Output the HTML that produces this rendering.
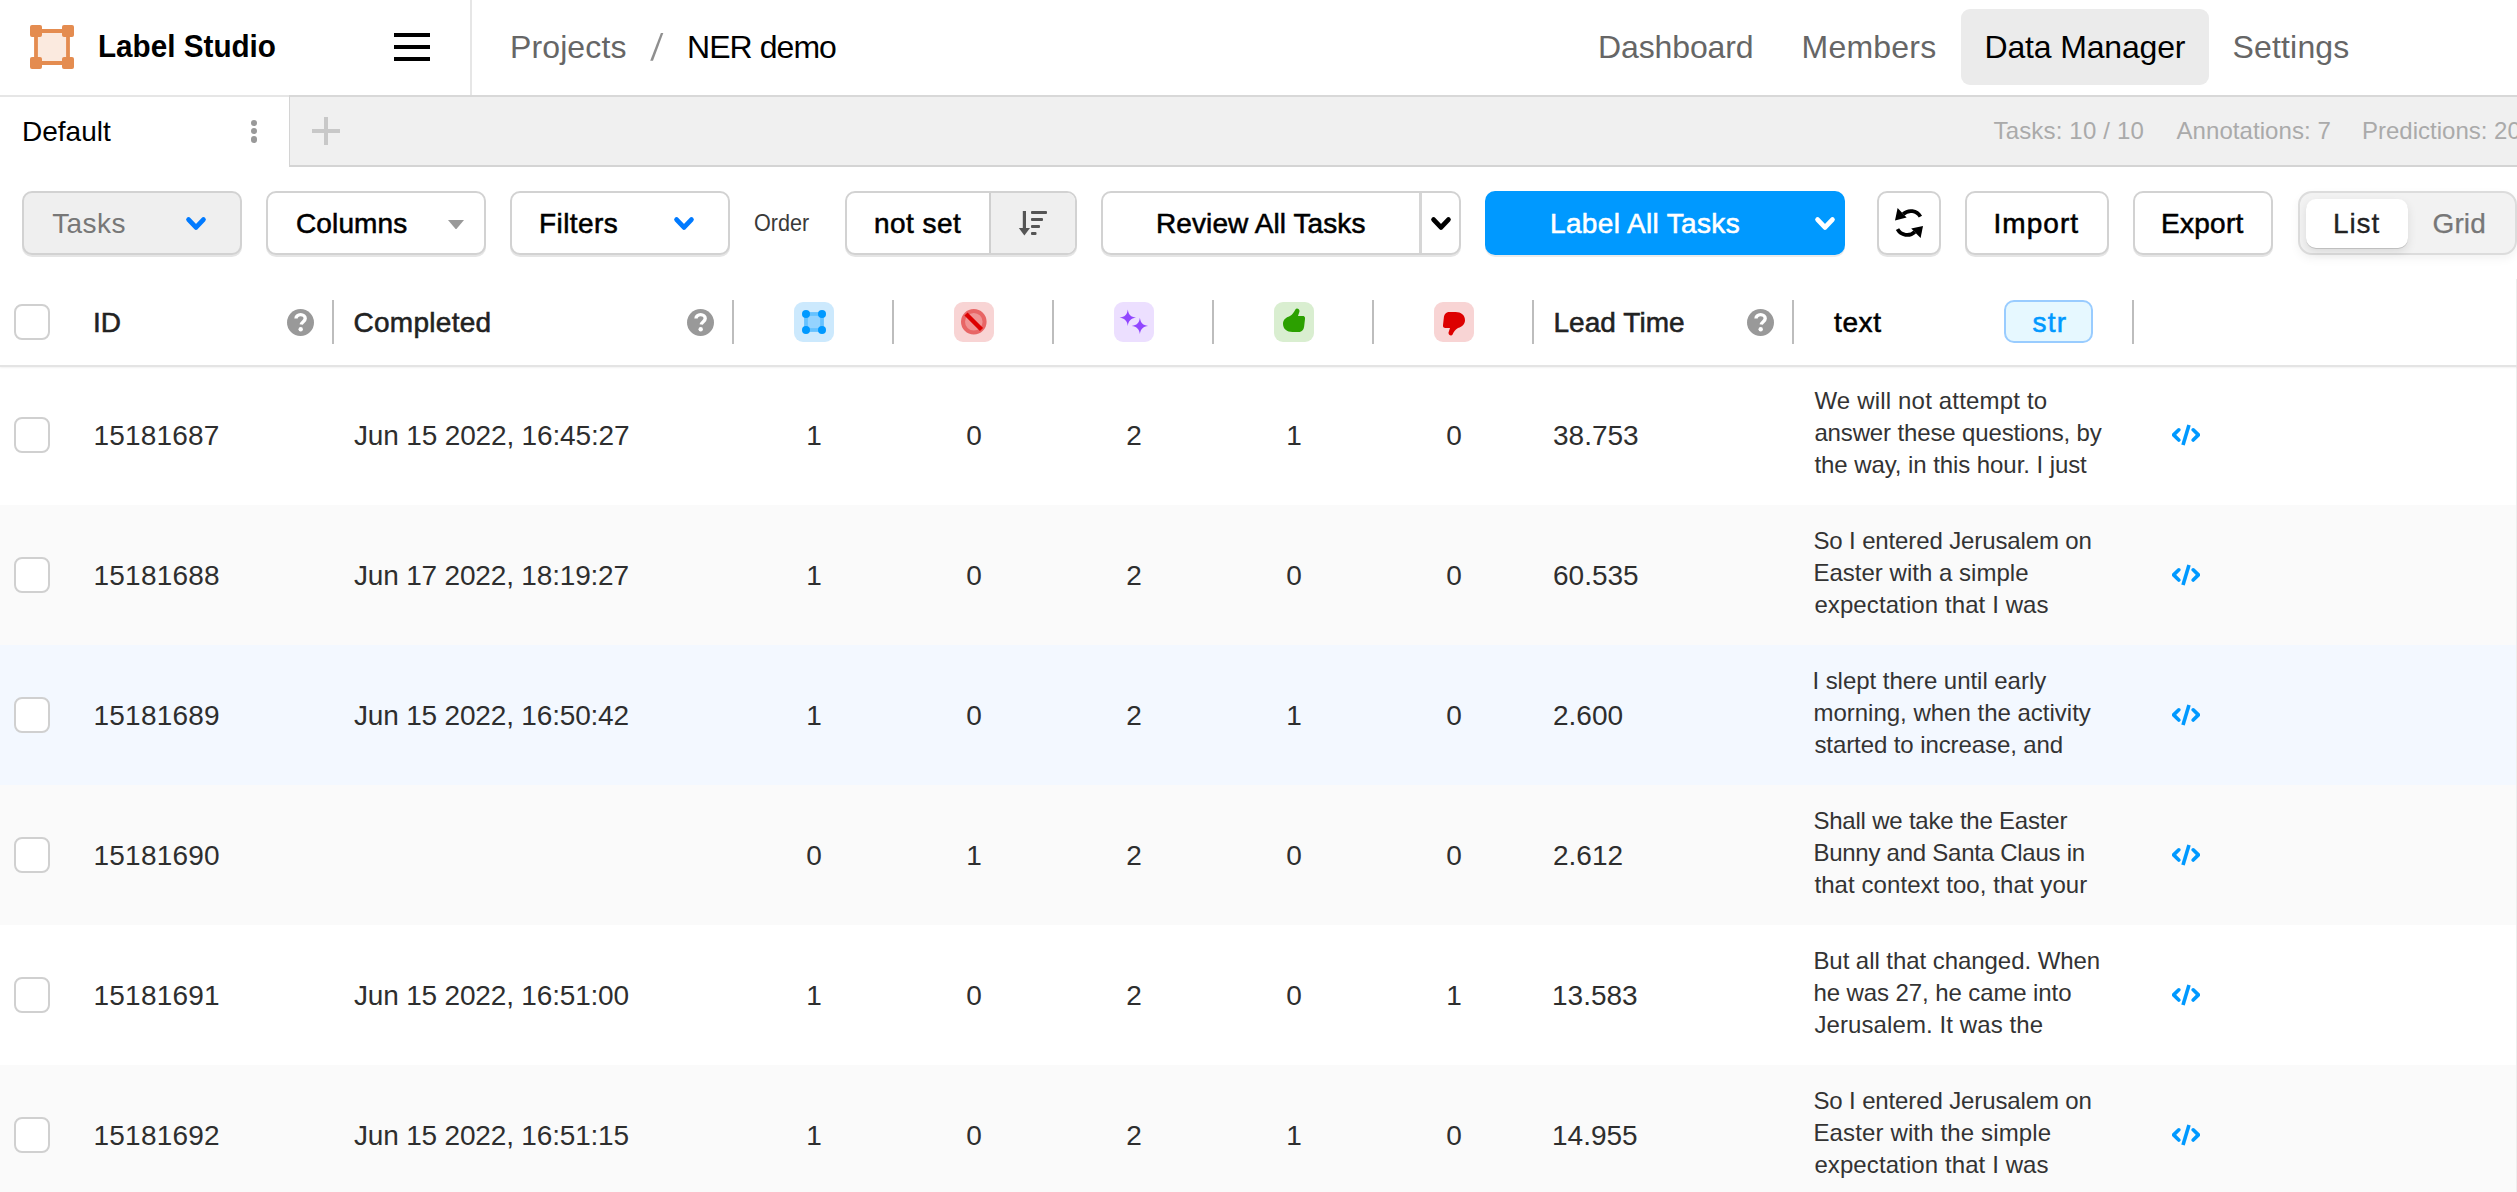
<!DOCTYPE html>
<html><head><meta charset="utf-8"><style>
html,body{margin:0;padding:0;width:2517px;height:1192px;overflow:hidden;background:#fff;font-family:"Liberation Sans", sans-serif;}
.tx{position:absolute;white-space:nowrap;line-height:40px;}
</style></head><body>
<div style="position:absolute;left:0px;top:367px;width:2517px;height:138px;background:#fff"></div><div style="position:absolute;left:0px;top:505px;width:2517px;height:140px;background:#fafafa"></div><div style="position:absolute;left:0px;top:645px;width:2517px;height:140px;background:#f3f8ff"></div><div style="position:absolute;left:0px;top:785px;width:2517px;height:140px;background:#fafafa"></div><div style="position:absolute;left:0px;top:925px;width:2517px;height:140px;background:#ffffff"></div><div style="position:absolute;left:0px;top:1065px;width:2517px;height:140px;background:#fafafa"></div><div style="position:absolute;left:14px;top:417px;width:36px;height:36px;box-sizing:border-box;border:2px solid #d0d0d0;border-radius:8px;background:#fff;"></div><svg style="position:absolute;left:2172px;top:424px" width="28" height="22" viewBox="0 0 28 22">
<path d="M6.8 5.8L1.6 10.9L6.8 16" stroke="#0099ff" stroke-width="3.6" fill="none" stroke-linecap="round" stroke-linejoin="round"/>
<path d="M21.2 5.8L26.4 10.9L21.2 16" stroke="#0099ff" stroke-width="3.6" fill="none" stroke-linecap="round" stroke-linejoin="round"/>
<path d="M17 1L11 21" stroke="#0099ff" stroke-width="3.6" fill="none"/></svg><div style="position:absolute;left:14px;top:557px;width:36px;height:36px;box-sizing:border-box;border:2px solid #d0d0d0;border-radius:8px;background:#fff;"></div><svg style="position:absolute;left:2172px;top:564px" width="28" height="22" viewBox="0 0 28 22">
<path d="M6.8 5.8L1.6 10.9L6.8 16" stroke="#0099ff" stroke-width="3.6" fill="none" stroke-linecap="round" stroke-linejoin="round"/>
<path d="M21.2 5.8L26.4 10.9L21.2 16" stroke="#0099ff" stroke-width="3.6" fill="none" stroke-linecap="round" stroke-linejoin="round"/>
<path d="M17 1L11 21" stroke="#0099ff" stroke-width="3.6" fill="none"/></svg><div style="position:absolute;left:14px;top:697px;width:36px;height:36px;box-sizing:border-box;border:2px solid #d0d0d0;border-radius:8px;background:#fff;"></div><svg style="position:absolute;left:2172px;top:704px" width="28" height="22" viewBox="0 0 28 22">
<path d="M6.8 5.8L1.6 10.9L6.8 16" stroke="#0099ff" stroke-width="3.6" fill="none" stroke-linecap="round" stroke-linejoin="round"/>
<path d="M21.2 5.8L26.4 10.9L21.2 16" stroke="#0099ff" stroke-width="3.6" fill="none" stroke-linecap="round" stroke-linejoin="round"/>
<path d="M17 1L11 21" stroke="#0099ff" stroke-width="3.6" fill="none"/></svg><div style="position:absolute;left:14px;top:837px;width:36px;height:36px;box-sizing:border-box;border:2px solid #d0d0d0;border-radius:8px;background:#fff;"></div><svg style="position:absolute;left:2172px;top:844px" width="28" height="22" viewBox="0 0 28 22">
<path d="M6.8 5.8L1.6 10.9L6.8 16" stroke="#0099ff" stroke-width="3.6" fill="none" stroke-linecap="round" stroke-linejoin="round"/>
<path d="M21.2 5.8L26.4 10.9L21.2 16" stroke="#0099ff" stroke-width="3.6" fill="none" stroke-linecap="round" stroke-linejoin="round"/>
<path d="M17 1L11 21" stroke="#0099ff" stroke-width="3.6" fill="none"/></svg><div style="position:absolute;left:14px;top:977px;width:36px;height:36px;box-sizing:border-box;border:2px solid #d0d0d0;border-radius:8px;background:#fff;"></div><svg style="position:absolute;left:2172px;top:984px" width="28" height="22" viewBox="0 0 28 22">
<path d="M6.8 5.8L1.6 10.9L6.8 16" stroke="#0099ff" stroke-width="3.6" fill="none" stroke-linecap="round" stroke-linejoin="round"/>
<path d="M21.2 5.8L26.4 10.9L21.2 16" stroke="#0099ff" stroke-width="3.6" fill="none" stroke-linecap="round" stroke-linejoin="round"/>
<path d="M17 1L11 21" stroke="#0099ff" stroke-width="3.6" fill="none"/></svg><div style="position:absolute;left:14px;top:1117px;width:36px;height:36px;box-sizing:border-box;border:2px solid #d0d0d0;border-radius:8px;background:#fff;"></div><svg style="position:absolute;left:2172px;top:1124px" width="28" height="22" viewBox="0 0 28 22">
<path d="M6.8 5.8L1.6 10.9L6.8 16" stroke="#0099ff" stroke-width="3.6" fill="none" stroke-linecap="round" stroke-linejoin="round"/>
<path d="M21.2 5.8L26.4 10.9L21.2 16" stroke="#0099ff" stroke-width="3.6" fill="none" stroke-linecap="round" stroke-linejoin="round"/>
<path d="M17 1L11 21" stroke="#0099ff" stroke-width="3.6" fill="none"/></svg>
<div style="position:absolute;left:0px;top:95px;width:2517px;height:2px;background:#e6e6e6"></div><div style="position:absolute;left:470px;top:0px;width:2px;height:95px;background:#e6e6e6"></div><svg style="position:absolute;left:30px;top:25px" width="44" height="44" viewBox="0 0 44 44">
<rect x="7" y="7" width="30" height="30" fill="#fbeadf"/>
<path d="M6 6H38M6 38H38M6 6V38M38 6V38" stroke="#e48c50" stroke-width="3.8" fill="none"/>
<rect x="0" y="0" width="12" height="12" rx="2" fill="#e48c50"/><rect x="32" y="0" width="12" height="12" rx="2" fill="#e48c50"/>
<rect x="0" y="32" width="12" height="12" rx="2" fill="#e48c50"/><rect x="32" y="32" width="12" height="12" rx="2" fill="#e48c50"/>
</svg><svg style="position:absolute;left:640px;top:25px" width="35" height="45" viewBox="0 0 35 45"><path d="M20.9 8.1H23.3L13 35.7H10.2Z" fill="#8f8f8f"/></svg><div style="position:absolute;left:394px;top:33px;width:36px;height:4px;background:#000"></div><div style="position:absolute;left:394px;top:45px;width:36px;height:4px;background:#000"></div><div style="position:absolute;left:394px;top:57px;width:36px;height:4px;background:#000"></div><div style="position:absolute;left:1961px;top:9px;width:248px;height:76px;background:#ebebeb;border-radius:9px"></div><div style="position:absolute;left:289px;top:95px;width:2228px;height:72px;background:#f0f0f0;box-sizing:border-box;border-top:2px solid #d8d8d8;border-left:1px solid #d4d4d4;border-bottom:2px solid #d4d4d4"></div><div style="position:absolute;left:250.7px;top:119.5px;width:6.6px;height:6.6px;border-radius:50%;background:#999"></div><div style="position:absolute;left:250.7px;top:127.7px;width:6.6px;height:6.6px;border-radius:50%;background:#999"></div><div style="position:absolute;left:250.7px;top:136.1px;width:6.6px;height:6.6px;border-radius:50%;background:#999"></div><div style="position:absolute;left:312px;top:129px;width:28px;height:4px;background:#c8c8c8"></div><div style="position:absolute;left:324px;top:117px;width:4px;height:28px;background:#c8c8c8"></div><div style="position:absolute;left:22px;top:191px;width:220px;height:64px;box-sizing:border-box;border:2px solid #d2d2d2;border-radius:10px;box-shadow:0 2px 0 rgba(0,0,0,0.10);background:#efefef"></div><div style="position:absolute;left:266px;top:191px;width:220px;height:64px;box-sizing:border-box;border:2px solid #d2d2d2;border-radius:10px;box-shadow:0 2px 0 rgba(0,0,0,0.10);background:#fff"></div><div style="position:absolute;left:510px;top:191px;width:220px;height:64px;box-sizing:border-box;border:2px solid #d2d2d2;border-radius:10px;box-shadow:0 2px 0 rgba(0,0,0,0.10);background:#fff"></div><div style="position:absolute;left:845px;top:191px;width:232px;height:64px;box-sizing:border-box;border:2px solid #d2d2d2;border-radius:10px;box-shadow:0 2px 0 rgba(0,0,0,0.10);background:#fff;overflow:hidden"></div><div style="position:absolute;left:989px;top:193px;width:86px;height:60px;background:#efefef;border-left:2px solid #cfcfcf;box-sizing:border-box;border-radius:0 8px 8px 0"></div><div style="position:absolute;left:1101px;top:191px;width:360px;height:64px;box-sizing:border-box;border:2px solid #d2d2d2;border-radius:10px;box-shadow:0 2px 0 rgba(0,0,0,0.10);background:#fff"></div><div style="position:absolute;left:1419px;top:193px;width:3px;height:60px;background:#d6d6d6"></div><div style="position:absolute;left:1485px;top:191px;width:360px;height:64px;background:#0099ff;border-radius:10px;box-shadow:0 2px 0 rgba(0,0,0,0.08)"></div><div style="position:absolute;left:1877px;top:191px;width:64px;height:64px;box-sizing:border-box;border:2px solid #d2d2d2;border-radius:10px;box-shadow:0 2px 0 rgba(0,0,0,0.10);background:#fff"></div><div style="position:absolute;left:1965px;top:191px;width:144px;height:64px;box-sizing:border-box;border:2px solid #d2d2d2;border-radius:10px;box-shadow:0 2px 0 rgba(0,0,0,0.10);background:#fff"></div><div style="position:absolute;left:2133px;top:191px;width:140px;height:64px;box-sizing:border-box;border:2px solid #d2d2d2;border-radius:10px;box-shadow:0 2px 0 rgba(0,0,0,0.10);background:#fff"></div><div style="position:absolute;left:2298px;top:191px;width:219px;height:64px;box-sizing:border-box;background:#f2f2f2;border:2px solid #dcdcdc;border-radius:14px;box-shadow:0 4px 10px rgba(0,0,0,0.05)"></div><div style="position:absolute;left:2516px;top:279px;width:1px;height:913px;background:#eeeeee"></div><div style="position:absolute;left:2306px;top:199px;width:102px;height:49px;background:#fff;border-radius:10px;box-shadow:0 1px 0 rgba(0,0,0,0.14),0 4px 10px rgba(0,0,0,0.10)"></div><svg style="position:absolute;left:186px;top:216.5px;overflow:visible" width="20" height="13" viewBox="0 0 20 13"><path d="M2.6 2.6L10.0 10.4L17.4 2.6" stroke="#007aff" stroke-width="4.8" fill="none" stroke-linecap="round" stroke-linejoin="round"/></svg><svg style="position:absolute;left:674px;top:216.5px;overflow:visible" width="20" height="13" viewBox="0 0 20 13"><path d="M2.6 2.6L10.0 10.4L17.4 2.6" stroke="#007aff" stroke-width="4.8" fill="none" stroke-linecap="round" stroke-linejoin="round"/></svg><svg style="position:absolute;left:1431px;top:216.5px;overflow:visible" width="20" height="13" viewBox="0 0 20 13"><path d="M2.6 2.6L10.0 10.4L17.4 2.6" stroke="#000" stroke-width="4.8" fill="none" stroke-linecap="round" stroke-linejoin="round"/></svg><svg style="position:absolute;left:1815px;top:216.5px;overflow:visible" width="20" height="13" viewBox="0 0 20 13"><path d="M2.6 2.6L10.0 10.4L17.4 2.6" stroke="#fff" stroke-width="4.8" fill="none" stroke-linecap="round" stroke-linejoin="round"/></svg><svg style="position:absolute;left:448px;top:219.5px" width="16" height="9.5" viewBox="0 0 16 9.5"><path d="M0 0H16L8 9.5Z" fill="#999"/></svg><svg style="position:absolute;left:1014px;top:210px" width="36" height="28" viewBox="0 0 36 28">
<path d="M10.4 1V20" stroke="#555" stroke-width="3.2"/><path d="M4.8 18H16L10.4 25.5Z" fill="#555"/>
<rect x="17" y="1" width="16" height="3" rx="1" fill="#555"/><rect x="17" y="8" width="12" height="3" rx="1" fill="#555"/>
<rect x="17" y="15" width="9" height="3" rx="1" fill="#555"/><rect x="17" y="22" width="5.5" height="3" rx="1" fill="#555"/>
</svg><svg style="position:absolute;left:1895px;top:208px" width="28" height="30" viewBox="0 0 28 30">
<path d="M8.2 6.2A11 11 0 0 1 25.4 8.6" stroke="#000" stroke-width="3.8" fill="none"/>
<path d="M2.6 0L0 12.4L11.6 9.6Z" fill="#000"/>
<path d="M2.5 21.2A11 11 0 0 0 19.8 23.8" stroke="#000" stroke-width="3.8" fill="none"/>
<path d="M28 18L16.2 20.6L25.6 30Z" fill="#000"/>
</svg><div style="position:absolute;left:0px;top:365px;width:2517px;height:2px;background:#e4e4e4;box-shadow:0 1px 2px rgba(0,0,0,0.06)"></div><div style="position:absolute;left:14px;top:304px;width:36px;height:36px;box-sizing:border-box;border:2px solid #d0d0d0;border-radius:8px;background:#fff;"></div><div style="position:absolute;left:332px;top:300px;width:2px;height:44px;background:#bdbdbd"></div><div style="position:absolute;left:732px;top:300px;width:2px;height:44px;background:#bdbdbd"></div><div style="position:absolute;left:892px;top:300px;width:2px;height:44px;background:#bdbdbd"></div><div style="position:absolute;left:1052px;top:300px;width:2px;height:44px;background:#bdbdbd"></div><div style="position:absolute;left:1212px;top:300px;width:2px;height:44px;background:#bdbdbd"></div><div style="position:absolute;left:1372px;top:300px;width:2px;height:44px;background:#bdbdbd"></div><div style="position:absolute;left:1532px;top:300px;width:2px;height:44px;background:#bdbdbd"></div><div style="position:absolute;left:1792px;top:300px;width:2px;height:44px;background:#bdbdbd"></div><div style="position:absolute;left:2132px;top:300px;width:2px;height:44px;background:#bdbdbd"></div><svg style="position:absolute;left:286.5px;top:308.5px" width="27" height="27" viewBox="0 0 27 27"><circle cx="13.5" cy="13.5" r="13.5" fill="#999"/>
<path d="M9 9.6C9 7.2 11 5.6 13.6 5.6C16.2 5.6 18.2 7.2 18.2 9.6C18.2 12.4 14.6 12.8 14.2 15.6" stroke="#fff" stroke-width="3.4" fill="none" stroke-linejoin="round"/><circle cx="13.7" cy="20.3" r="2.2" fill="#fff"/></svg><svg style="position:absolute;left:686.5px;top:308.5px" width="27" height="27" viewBox="0 0 27 27"><circle cx="13.5" cy="13.5" r="13.5" fill="#999"/>
<path d="M9 9.6C9 7.2 11 5.6 13.6 5.6C16.2 5.6 18.2 7.2 18.2 9.6C18.2 12.4 14.6 12.8 14.2 15.6" stroke="#fff" stroke-width="3.4" fill="none" stroke-linejoin="round"/><circle cx="13.7" cy="20.3" r="2.2" fill="#fff"/></svg><svg style="position:absolute;left:1746.5px;top:308.5px" width="27" height="27" viewBox="0 0 27 27"><circle cx="13.5" cy="13.5" r="13.5" fill="#999"/>
<path d="M9 9.6C9 7.2 11 5.6 13.6 5.6C16.2 5.6 18.2 7.2 18.2 9.6C18.2 12.4 14.6 12.8 14.2 15.6" stroke="#fff" stroke-width="3.4" fill="none" stroke-linejoin="round"/><circle cx="13.7" cy="20.3" r="2.2" fill="#fff"/></svg><div style="position:absolute;left:794px;top:302px;width:40px;height:40px;border-radius:9px;background:#cce9fd"></div><svg style="position:absolute;left:794px;top:302px" width="40" height="40" viewBox="0 0 40 40">
<rect x="12" y="12" width="16" height="16" fill="#94d3ff"/><rect x="12" y="12" width="16" height="16" fill="none" stroke="#66c2ff" stroke-width="3.8"/>
<circle cx="12" cy="12" r="4" fill="#0099ff"/><circle cx="28" cy="12" r="4" fill="#0099ff"/><circle cx="12" cy="28" r="4" fill="#0099ff"/><circle cx="28" cy="28" r="4" fill="#0099ff"/></svg><div style="position:absolute;left:954px;top:302px;width:40px;height:40px;border-radius:9px;background:#f8d4d4"></div><svg style="position:absolute;left:954px;top:302px" width="40" height="40" viewBox="0 0 40 40">
<circle cx="19.8" cy="19.8" r="10.8" fill="#f09494" stroke="#e86666" stroke-width="4"/>
<path d="M12 12L27.5 27.5" stroke="#dd0000" stroke-width="4.4" stroke-linecap="butt"/></svg><div style="position:absolute;left:1114px;top:302px;width:40px;height:40px;border-radius:9px;background:#ecdfff"></div><svg style="position:absolute;left:1114px;top:302px" width="40" height="40" viewBox="0 0 40 40">
<path d="M13.8 7.600000000000001C14.538 12.848 16.752 15.062000000000001 22.0 15.8C16.752 16.538 14.538 18.752 13.8 24.0C13.062000000000001 18.752 10.848 16.538 5.600000000000001 15.8C10.848 15.062000000000001 13.062000000000001 12.848 13.8 7.600000000000001Z" fill="#9146ff"/><path d="M25.9 15.7C26.637999999999998 20.948 28.851999999999997 23.162 34.099999999999994 23.9C28.851999999999997 24.637999999999998 26.637999999999998 26.851999999999997 25.9 32.099999999999994C25.162 26.851999999999997 22.948 24.637999999999998 17.7 23.9C22.948 23.162 25.162 20.948 25.9 15.7Z" fill="#9146ff"/></svg><div style="position:absolute;left:1274px;top:302px;width:40px;height:40px;border-radius:9px;background:#d9eed0"></div><svg style="position:absolute;left:1283px;top:308px" width="22" height="24" viewBox="0 0 22 24"><path d="M14 0.6C15.6 0.6 16.8 2 16.4 3.8L15 8H19.8C21.4 8 22.3 9.2 22 11L21.2 18C20.8 21.6 19.2 24 15.6 24H9.4C4 24 0 21 0 15.8C0 12 2.6 9.6 7 8C9.6 6.6 11.2 4 12.4 1.6C12.8 0.9 13.4 0.6 14 0.6Z" fill="#2ca000"/></svg><div style="position:absolute;left:1434px;top:302px;width:40px;height:40px;border-radius:9px;background:#f8d4d4"></div><svg style="position:absolute;left:1443px;top:312px" width="22" height="24" viewBox="0 0 22 24"><path transform="rotate(180 11 12)" d="M14 0.6C15.6 0.6 16.8 2 16.4 3.8L15 8H19.8C21.4 8 22.3 9.2 22 11L21.2 18C20.8 21.6 19.2 24 15.6 24H9.4C4 24 0 21 0 15.8C0 12 2.6 9.6 7 8C9.6 6.6 11.2 4 12.4 1.6C12.8 0.9 13.4 0.6 14 0.6Z" fill="#dd0000"/></svg><div style="position:absolute;left:2004px;top:300px;width:89px;height:43px;box-sizing:border-box;background:#e6f8ff;border:2px solid #99ccff;border-radius:10px"></div>
<div class="tx" id="t_ls" style="left:97.90px;top:26.40px;font-size:32px;color:#000;font-weight:bold;transform:scaleX(0.927);transform-origin:97.90px 0;transform-origin:0 0;">Label Studio</div><div class="tx" id="t_proj" style="left:510.00px;top:27.30px;font-size:32px;color:#666;letter-spacing:0.114px;">Projects</div><div class="tx" id="t_ner" style="left:687.00px;top:27.30px;font-size:32px;color:#000;letter-spacing:-0.943px;">NER demo</div><div class="tx" id="t_dash" style="left:1598.00px;top:26.80px;font-size:32px;color:#666;letter-spacing:-0.125px;">Dashboard</div><div class="tx" id="t_mem" style="left:1801.50px;top:26.80px;font-size:32px;color:#666;letter-spacing:0.233px;">Members</div><div class="tx" id="t_dm" style="left:1984.50px;top:26.80px;font-size:32px;color:#000;letter-spacing:-0.164px;">Data Manager</div><div class="tx" id="t_set" style="left:2232.50px;top:26.80px;font-size:32px;color:#666;letter-spacing:0.171px;">Settings</div><div class="tx" id="t_def" style="left:22.00px;top:111.80px;font-size:28px;color:#000;">Default</div><div class="tx" id="t_st1" style="left:1993.50px;top:111.00px;font-size:24px;color:#aaa;letter-spacing:0.169px;">Tasks: 10 / 10</div><div class="tx" id="t_st2" style="left:2176.50px;top:111.00px;font-size:24px;color:#aaa;letter-spacing:0.062px;">Annotations: 7</div><div class="tx" id="t_st3" style="left:2362.00px;top:111.00px;font-size:24px;color:#aaa;">Predictions: 20</div><div class="tx" id="t_tasks" style="left:52.20px;top:204.00px;font-size:28px;color:#777;letter-spacing:0.425px;">Tasks</div><div class="tx" id="t_cols" style="left:296.00px;top:204.00px;font-size:28px;color:#000;-webkit-text-stroke:0.55px #000;letter-spacing:0.133px;">Columns</div><div class="tx" id="t_filt" style="left:539.00px;top:204.00px;font-size:28px;color:#000;-webkit-text-stroke:0.55px #000;letter-spacing:0.433px;">Filters</div><div class="tx" id="t_order" style="left:753.50px;top:202.90px;font-size:24px;color:#3a3a3a;transform:scaleX(0.9);transform-origin:753.50px 0;transform-origin:0 0;">Order</div><div class="tx" id="t_notset" style="left:874.00px;top:204.00px;font-size:28px;color:#000;-webkit-text-stroke:0.55px #000;letter-spacing:0.467px;">not set</div><div class="tx" id="t_review" style="left:1156.00px;top:204.00px;font-size:28px;color:#000;-webkit-text-stroke:0.55px #000;letter-spacing:0.093px;">Review All Tasks</div><div class="tx" id="t_label" style="left:1550.00px;top:204.20px;font-size:28px;color:#fff;-webkit-text-stroke:0.55px #fff;letter-spacing:0.357px;">Label All Tasks</div><div class="tx" id="t_import" style="left:1993.50px;top:204.00px;font-size:28px;color:#000;-webkit-text-stroke:0.55px #000;letter-spacing:1.040px;">Import</div><div class="tx" id="t_export" style="left:2161.00px;top:204.00px;font-size:28px;color:#000;-webkit-text-stroke:0.55px #000;letter-spacing:0.280px;">Export</div><div class="tx" id="t_list" style="left:2333.00px;top:204.00px;font-size:28px;color:#222;-webkit-text-stroke:0.3px #222;letter-spacing:0.867px;">List</div><div class="tx" id="t_grid" style="left:2432.50px;top:204.00px;font-size:28px;color:#777;-webkit-text-stroke:0.25px #777;letter-spacing:0.133px;">Grid</div><div class="tx" id="h_id" style="left:93.00px;top:303.20px;font-size:28px;color:#222;-webkit-text-stroke:0.55px #222;">ID</div><div class="tx" id="h_comp" style="left:353.50px;top:302.90px;font-size:28px;color:#222;-webkit-text-stroke:0.55px #222;letter-spacing:0.275px;">Completed</div><div class="tx" id="h_lead" style="left:1553.50px;top:302.80px;font-size:28px;color:#222;-webkit-text-stroke:0.55px #222;letter-spacing:0.050px;">Lead Time</div><div class="tx" id="h_text" style="left:1834.00px;top:303.10px;font-size:28px;color:#000;-webkit-text-stroke:0.55px #000;letter-spacing:0.600px;">text</div><div class="tx" id="h_str" style="left:2032.50px;top:303.10px;font-size:28px;color:#0099ff;-webkit-text-stroke:0.55px #0099ff;letter-spacing:1.200px;">str</div><div class="tx" id="r0_id" style="left:93.50px;top:416.20px;font-size:28px;color:#2e2e2e;letter-spacing:0.171px;">15181687</div><div class="tx" id="r0_date" style="left:354.00px;top:416.20px;font-size:28px;color:#2e2e2e;letter-spacing:-0.160px;">Jun 15 2022, 16:45:27</div><div class="tx" id="r0_n0" style="left:764px;width:100px;text-align:center;top:416.20px;font-size:28px;color:#2e2e2e;">1</div><div class="tx" id="r0_n1" style="left:924px;width:100px;text-align:center;top:416.20px;font-size:28px;color:#2e2e2e;">0</div><div class="tx" id="r0_n2" style="left:1084px;width:100px;text-align:center;top:416.20px;font-size:28px;color:#2e2e2e;">2</div><div class="tx" id="r0_n3" style="left:1244px;width:100px;text-align:center;top:416.20px;font-size:28px;color:#2e2e2e;">1</div><div class="tx" id="r0_n4" style="left:1404px;width:100px;text-align:center;top:416.20px;font-size:28px;color:#2e2e2e;">0</div><div class="tx" id="r0_lead" style="left:1553.00px;top:416.20px;font-size:28px;color:#2e2e2e;">38.753</div><div class="tx" id="r0_l0" style="left:1814.40px;top:380.70px;font-size:24px;color:#333;letter-spacing:0.181px;">We will not attempt to</div><div class="tx" id="r0_l1" style="left:1814.40px;top:412.70px;font-size:24px;color:#333;letter-spacing:-0.136px;">answer these questions, by</div><div class="tx" id="r0_l2" style="left:1814.40px;top:444.70px;font-size:24px;color:#333;letter-spacing:-0.071px;">the way, in this hour. I just</div><div class="tx" id="r1_id" style="left:93.50px;top:556.20px;font-size:28px;color:#2e2e2e;letter-spacing:0.229px;">15181688</div><div class="tx" id="r1_date" style="left:354.00px;top:556.20px;font-size:28px;color:#2e2e2e;letter-spacing:-0.180px;">Jun 17 2022, 18:19:27</div><div class="tx" id="r1_n0" style="left:764px;width:100px;text-align:center;top:556.20px;font-size:28px;color:#2e2e2e;">1</div><div class="tx" id="r1_n1" style="left:924px;width:100px;text-align:center;top:556.20px;font-size:28px;color:#2e2e2e;">0</div><div class="tx" id="r1_n2" style="left:1084px;width:100px;text-align:center;top:556.20px;font-size:28px;color:#2e2e2e;">2</div><div class="tx" id="r1_n3" style="left:1244px;width:100px;text-align:center;top:556.20px;font-size:28px;color:#2e2e2e;">0</div><div class="tx" id="r1_n4" style="left:1404px;width:100px;text-align:center;top:556.20px;font-size:28px;color:#2e2e2e;">0</div><div class="tx" id="r1_lead" style="left:1553.00px;top:556.20px;font-size:28px;color:#2e2e2e;">60.535</div><div class="tx" id="r1_l0" style="left:1813.40px;top:520.70px;font-size:24px;color:#333;letter-spacing:-0.125px;">So I entered Jerusalem on</div><div class="tx" id="r1_l1" style="left:1813.40px;top:552.70px;font-size:24px;color:#333;letter-spacing:0.021px;">Easter with a simple</div><div class="tx" id="r1_l2" style="left:1814.40px;top:584.70px;font-size:24px;color:#333;letter-spacing:0.095px;">expectation that I was</div><div class="tx" id="r2_id" style="left:93.50px;top:696.20px;font-size:28px;color:#2e2e2e;letter-spacing:0.229px;">15181689</div><div class="tx" id="r2_date" style="left:354.00px;top:696.20px;font-size:28px;color:#2e2e2e;letter-spacing:-0.180px;">Jun 15 2022, 16:50:42</div><div class="tx" id="r2_n0" style="left:764px;width:100px;text-align:center;top:696.20px;font-size:28px;color:#2e2e2e;">1</div><div class="tx" id="r2_n1" style="left:924px;width:100px;text-align:center;top:696.20px;font-size:28px;color:#2e2e2e;">0</div><div class="tx" id="r2_n2" style="left:1084px;width:100px;text-align:center;top:696.20px;font-size:28px;color:#2e2e2e;">2</div><div class="tx" id="r2_n3" style="left:1244px;width:100px;text-align:center;top:696.20px;font-size:28px;color:#2e2e2e;">1</div><div class="tx" id="r2_n4" style="left:1404px;width:100px;text-align:center;top:696.20px;font-size:28px;color:#2e2e2e;">0</div><div class="tx" id="r2_lead" style="left:1553.00px;top:696.20px;font-size:28px;color:#2e2e2e;">2.600</div><div class="tx" id="r2_l0" style="left:1812.40px;top:660.70px;font-size:24px;color:#333;letter-spacing:-0.042px;">I slept there until early</div><div class="tx" id="r2_l1" style="left:1813.40px;top:692.70px;font-size:24px;color:#333;">morning, when the activity</div><div class="tx" id="r2_l2" style="left:1814.40px;top:724.70px;font-size:24px;color:#333;letter-spacing:-0.087px;">started to increase, and</div><div class="tx" id="r3_id" style="left:93.50px;top:836.20px;font-size:28px;color:#2e2e2e;letter-spacing:0.229px;">15181690</div><div class="tx" id="r3_n0" style="left:764px;width:100px;text-align:center;top:836.20px;font-size:28px;color:#2e2e2e;">0</div><div class="tx" id="r3_n1" style="left:924px;width:100px;text-align:center;top:836.20px;font-size:28px;color:#2e2e2e;">1</div><div class="tx" id="r3_n2" style="left:1084px;width:100px;text-align:center;top:836.20px;font-size:28px;color:#2e2e2e;">2</div><div class="tx" id="r3_n3" style="left:1244px;width:100px;text-align:center;top:836.20px;font-size:28px;color:#2e2e2e;">0</div><div class="tx" id="r3_n4" style="left:1404px;width:100px;text-align:center;top:836.20px;font-size:28px;color:#2e2e2e;">0</div><div class="tx" id="r3_lead" style="left:1553.00px;top:836.20px;font-size:28px;color:#2e2e2e;">2.612</div><div class="tx" id="r3_l0" style="left:1813.40px;top:800.70px;font-size:24px;color:#333;letter-spacing:-0.209px;">Shall we take the Easter</div><div class="tx" id="r3_l1" style="left:1813.40px;top:832.70px;font-size:24px;color:#333;letter-spacing:-0.252px;">Bunny and Santa Claus in</div><div class="tx" id="r3_l2" style="left:1814.40px;top:864.70px;font-size:24px;color:#333;letter-spacing:0.077px;">that context too, that your</div><div class="tx" id="r4_id" style="left:93.50px;top:976.20px;font-size:28px;color:#2e2e2e;letter-spacing:0.229px;">15181691</div><div class="tx" id="r4_date" style="left:354.00px;top:976.20px;font-size:28px;color:#2e2e2e;letter-spacing:-0.180px;">Jun 15 2022, 16:51:00</div><div class="tx" id="r4_n0" style="left:764px;width:100px;text-align:center;top:976.20px;font-size:28px;color:#2e2e2e;">1</div><div class="tx" id="r4_n1" style="left:924px;width:100px;text-align:center;top:976.20px;font-size:28px;color:#2e2e2e;">0</div><div class="tx" id="r4_n2" style="left:1084px;width:100px;text-align:center;top:976.20px;font-size:28px;color:#2e2e2e;">2</div><div class="tx" id="r4_n3" style="left:1244px;width:100px;text-align:center;top:976.20px;font-size:28px;color:#2e2e2e;">0</div><div class="tx" id="r4_n4" style="left:1404px;width:100px;text-align:center;top:976.20px;font-size:28px;color:#2e2e2e;">1</div><div class="tx" id="r4_lead" style="left:1552.00px;top:976.20px;font-size:28px;color:#2e2e2e;">13.583</div><div class="tx" id="r4_l0" style="left:1813.40px;top:940.70px;font-size:24px;color:#333;letter-spacing:-0.056px;">But all that changed. When</div><div class="tx" id="r4_l1" style="left:1813.40px;top:972.70px;font-size:24px;color:#333;letter-spacing:-0.091px;">he was 27, he came into</div><div class="tx" id="r4_l2" style="left:1814.40px;top:1004.70px;font-size:24px;color:#333;letter-spacing:0.100px;">Jerusalem. It was the</div><div class="tx" id="r5_id" style="left:93.50px;top:1116.20px;font-size:28px;color:#2e2e2e;letter-spacing:0.229px;">15181692</div><div class="tx" id="r5_date" style="left:354.00px;top:1116.20px;font-size:28px;color:#2e2e2e;letter-spacing:-0.180px;">Jun 15 2022, 16:51:15</div><div class="tx" id="r5_n0" style="left:764px;width:100px;text-align:center;top:1116.20px;font-size:28px;color:#2e2e2e;">1</div><div class="tx" id="r5_n1" style="left:924px;width:100px;text-align:center;top:1116.20px;font-size:28px;color:#2e2e2e;">0</div><div class="tx" id="r5_n2" style="left:1084px;width:100px;text-align:center;top:1116.20px;font-size:28px;color:#2e2e2e;">2</div><div class="tx" id="r5_n3" style="left:1244px;width:100px;text-align:center;top:1116.20px;font-size:28px;color:#2e2e2e;">1</div><div class="tx" id="r5_n4" style="left:1404px;width:100px;text-align:center;top:1116.20px;font-size:28px;color:#2e2e2e;">0</div><div class="tx" id="r5_lead" style="left:1552.00px;top:1116.20px;font-size:28px;color:#2e2e2e;">14.955</div><div class="tx" id="r5_l0" style="left:1813.40px;top:1080.70px;font-size:24px;color:#333;letter-spacing:-0.125px;">So I entered Jerusalem on</div><div class="tx" id="r5_l1" style="left:1813.40px;top:1112.70px;font-size:24px;color:#333;letter-spacing:0.143px;">Easter with the simple</div><div class="tx" id="r5_l2" style="left:1814.40px;top:1144.70px;font-size:24px;color:#333;letter-spacing:0.095px;">expectation that I was</div>
</body></html>
